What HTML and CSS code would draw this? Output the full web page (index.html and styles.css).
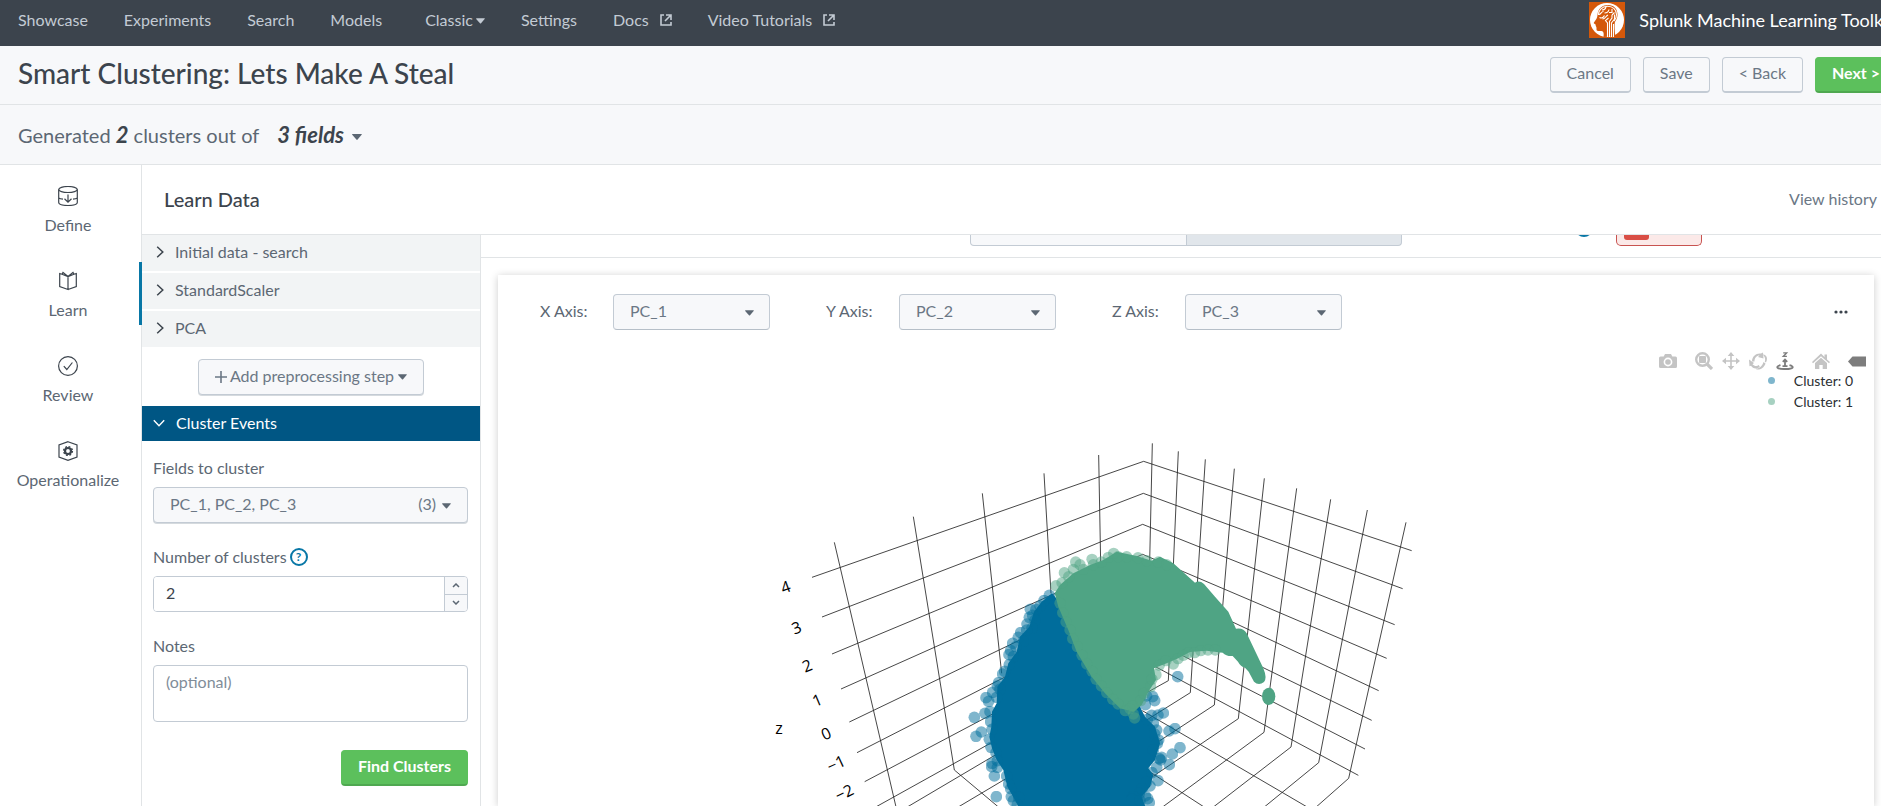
FILE: index.html
```html
<!DOCTYPE html>
<html lang="en">
<head>
<meta charset="utf-8">
<title>Smart Clustering: Lets Make A Steal</title>
<link rel="stylesheet" href="styles.css">
</head>
<body>
<svg class="defs" width="0" height="0" aria-hidden="true">
  <defs>
    <symbol id="caret" viewBox="0 0 10 6"><path d="M0 .5Q0 0 .6 0H9.400Q10 0 9.800.6L5.600 5.600Q5 6.200 4.400 5.600L.2.800Z" fill="currentColor"/></symbol>
    <symbol id="external" viewBox="0 0 12 12"><path d="M4 1H1v10h10V8M6 1h5v5M11 1 5 7" fill="none" stroke="currentColor" stroke-width="1.600"/></symbol>
    <symbol id="chevron" viewBox="0 0 8 12"><path d="M1.200.8 6.800 6 1.200 11.200" fill="none" stroke="currentColor" stroke-width="1.500"/></symbol>
  </defs>
</svg>
<div class="page">
  <header class="topbar">
    <nav class="topnav" aria-label="Main">
      <a href="#">Showcase</a>
      <a href="#">Experiments</a>
      <a href="#">Search</a>
      <a href="#">Models</a>
      <a href="#" class="with-caret">Classic<svg class="caret"><use href="#caret"/></svg></a>
      <a href="#">Settings</a>
      <a href="#" class="with-icon">Docs<svg class="ext"><use href="#external"/></svg></a>
      <a href="#" class="with-icon">Video Tutorials<svg class="ext"><use href="#external"/></svg></a>
    </nav>
    <div class="brand">
      <svg class="brand-logo" viewBox="0 0 36 36" aria-hidden="true">
        <rect width="36" height="36" fill="#d4580a"/>
        <circle cx="18" cy="18" r="17" fill="#fff"/>
        <path d="M8.500 13C9 6 14 3 19 3c6 0 9.500 4 9.500 9.500 0 4-1.500 5.500-2.500 7.500-.8 2-.2 12 .5 14.500L14.500 35c.2-2 .4-3.500-.3-5-.8-1.300-3-.8-5-.9-1.700-.1-1.800-1.200-1.700-3.100.1-1.200-.9-1.500-.8-2.400.1-.8-.2-1.500-1.400-1.900-.8-.4-.6-1 0-1.700 1.800-2.600 3-4 3.200-7Z" fill="#d4580a"/>
        <g fill="none" stroke="#fff" stroke-width="1.100">
          <path d="M9.500 13c-.2-4 3-8.500 9-8.700 5.500-.1 9 3.700 9 8.200 0 3-1 5-2.500 6.500"/>
          <path d="M10.500 15.500c2 1 4 0 5-2M10 12.500c2 0 2-3 4.500-3M13 8c2 0 3.500-1 4-3M13.500 17c3 0 3-3 5.500-4M15.500 11c2 0 4-1 4.500-3.500M18.500 35V21l-2-2.500 3-2.500M20.500 35V19.500l2.500-3.500v-3M22.500 35V21l3-4v-4.500M24.500 35V22M20 10.500h3V7M25.500 10.500l-2.500 2.500"/>
        </g>
      </svg>
      <span class="brand-name">Splunk Machine Learning Toolkit</span>
    </div>
  </header>

  <section class="titlebar">
    <h1>Smart Clustering: Lets Make A Steal</h1>
    <div class="actions">
      <button type="button" class="btn">Cancel</button>
      <button type="button" class="btn">Save</button>
      <button type="button" class="btn">&lt; Back</button>
      <button type="button" class="btn btn-primary">Next &gt;</button>
    </div>
  </section>

  <section class="summary">
    <span>Generated <b>2</b> clusters out of</span>
    <button type="button" class="fields-link">3 fields<svg class="caret"><use href="#caret"/></svg></button>
  </section>

  <div class="workspace">
    <nav class="steps" aria-label="Steps">
      <a href="#" class="step">
        <svg viewBox="0 0 20 20"><g fill="none" stroke="#3c444d" stroke-width="1.200"><ellipse cx="10" cy="3.500" rx="9.300" ry="3"/><path d="M.7 3.500v13c0 4 18.600 4 18.600 0v-13M.7 12c1 .7 2.300 1 4.300 1.200M19.300 12c-1 .7-2.300 1-4.300 1.200M10 8.500v7.500M6.500 12.800 10 16.200l3.500-3.400"/></g></svg>
        Define
      </a>
      <a href="#" class="step step-active" aria-current="step">
        <svg viewBox="0 0 20 20"><path d="M10 5.500v13L1.700 15.500V2.500L4 3.300M10 18.500l8.300-3V2.500L16 3.300M4 3.300l1-1.800 5 4 5-4 1 1.800M4 3.300l6 2.200 6-2.200" fill="none" stroke="#3c444d" stroke-width="1.200"/></svg>
        Learn
      </a>
      <a href="#" class="step">
        <svg viewBox="0 0 20 20"><g fill="none" stroke="#3c444d" stroke-width="1.200"><ellipse cx="10" cy="10" rx="9.400" ry="9.400"/><path d="m5.800 10.200 3 3.300 5.600-7"/></g></svg>
        Review
      </a>
      <a href="#" class="step">
        <svg viewBox="0 0 20 20"><path d="M10 .7 19 4v12l-9 3.300L1 16V4Z" fill="none" stroke="#3c444d" stroke-width="1.200"/><circle cx="10" cy="10" r="3" fill="none" stroke="#3c444d" stroke-width="2.200"/><circle cx="10" cy="10" r="4.400" fill="none" stroke="#3c444d" stroke-width="1.400" stroke-dasharray="1.900 1.555"/></svg>
        Operationalize
      </a>
    </nav>

    <main class="main">
      <div class="main-head">
        <h2>Learn Data</h2>
        <a href="#">View history</a>
      </div>
      <div class="main-body">
        <aside class="panel">
          <div class="rows">
            <button type="button" class="row"><svg><use href="#chevron"/></svg>Initial data - search</button>
            <button type="button" class="row"><svg><use href="#chevron"/></svg>StandardScaler</button>
            <button type="button" class="row"><svg><use href="#chevron"/></svg>PCA</button>
          </div>
          <div class="add-step">
            <button type="button" class="btn btn-gray"><svg class="plus" viewBox="0 0 12 12"><path d="M6 0v12M0 6h12" stroke="currentColor" stroke-width="1.600"/></svg>Add preprocessing step<svg class="caret"><use href="#caret"/></svg></button>
          </div>
          <button type="button" class="section-head"><svg viewBox="0 0 12 8"><path d="M.8 1.200 6 6.800l5.200-5.600" fill="none" stroke="currentColor" stroke-width="1.400"/></svg>Cluster Events</button>
          <form class="form">
            <div class="field">
              <label for="fields">Fields to cluster</label>
              <button type="button" id="fields" class="btn btn-gray multi"><span>PC_1, PC_2, PC_3</span><span class="count">(3)<svg class="caret"><use href="#caret"/></svg></span></button>
            </div>
            <div class="field">
              <div class="label-line"><label for="k">Number of clusters</label><button type="button" class="help" aria-label="Help">?</button></div>
              <div class="number">
                <input id="k" type="number" value="2">
                <div class="spin">
                  <button type="button" aria-label="Increase"><svg viewBox="0 0 8 5"><path d="m1 4 3-3 3 3" fill="none" stroke="currentColor" stroke-width="1.500"/></svg></button>
                  <button type="button" aria-label="Decrease"><svg viewBox="0 0 8 5"><path d="m1 1 3 3 3-3" fill="none" stroke="currentColor" stroke-width="1.500"/></svg></button>
                </div>
              </div>
            </div>
            <div class="field">
              <label for="notes">Notes</label>
              <textarea id="notes" placeholder="(optional)"></textarea>
            </div>
            <button type="button" class="btn btn-primary submit">Find Clusters</button>
          </form>
        </aside>

        <section class="results">
          <div class="toolstrip">
            <div class="segment"><span></span><span></span></div>
            <i class="info-dot"></i>
            <div class="alert-box"><i></i></div>
          </div>
          <article class="card">
            <div class="controls">
              <div class="axis"><label for="ax">X Axis:</label><div class="select"><select id="ax"><option>PC_1</option></select><svg class="caret"><use href="#caret"/></svg></div></div>
              <div class="axis"><label for="ay">Y Axis:</label><div class="select"><select id="ay"><option>PC_2</option></select><svg class="caret"><use href="#caret"/></svg></div></div>
              <div class="axis"><label for="az">Z Axis:</label><div class="select"><select id="az"><option>PC_3</option></select><svg class="caret"><use href="#caret"/></svg></div></div>
              <button type="button" class="more" aria-label="More"><svg viewBox="0 0 14 4" fill="#3c444d"><circle cx="2" cy="2" r="1.600"/><circle cx="7" cy="2" r="1.600"/><circle cx="12" cy="2" r="1.600"/></svg></button>
            </div>
            <div class="plot">
              <svg class="scene" viewBox="3 -270 2472 1428" role="img" aria-label="3D scatter plot of two clusters">
                <defs>
                  <marker id="mb" markerUnits="userSpaceOnUse" markerWidth="36" markerHeight="36" refX="18" refY="18" viewBox="0 0 36 36"><circle cx="18" cy="18" r="17.500" fill="#006d9c" fill-opacity=".5"/></marker>
                  <marker id="mg" markerUnits="userSpaceOnUse" markerWidth="36" markerHeight="36" refX="18" refY="18" viewBox="0 0 36 36"><circle cx="18" cy="18" r="17" fill="#4fa484" fill-opacity=".5"/></marker>
                </defs>
                <g fill="none" stroke="#222" stroke-width="2.500">
                  <path transform="translate(-39 60)" d="M156 412 1151 64M186 531 1150 160M216 642 1148 253M243 747 1148 343M268 846 1146 424M291 938 1146 501M314 1025 1146 585M340 1105 1146 657M223 307 409 1105M460 230 583 990 720 1105M667 160 725 700M852 100 873 460M1016 45 1022 370M435 1105 760 913M588 1105 790 985"/>
                  <path transform="translate(921 30)" d="M191 94 995 362M190 190 968 476M188 283 944 584M188 373 920 685M187 449 896 782M187 537 875 871M187 615 855 957M187 689 835 1036M217 40 209 395M295 64 265 752 200 788M376 88 331 788 200 870M463 116 403 825 200 958M553 145 475 866 200 1052M650 175 552 907 245 1133M752 208 633 951 395 1135M862 240 716 998 548 1135M978 277 806 1045 704 1135M187 842 690 1136M170 1000 380 1136"/>
                </g>
                <g transform="translate(561 330)">
                  <path d="M276 190 245 215 222 245 208 290 180 320 170 365 145 400 135 440 112 470 110 520 96 545 94 590 88 620 96 655 110 690 130 720 142 770 165 810 180 840H560L545 800 570 770 580 735 565 715 585 690 600 640 585 590 555 560 500 450Z" fill="#006d9c"/>
                  <path marker-start="url(#mb)" marker-mid="url(#mb)" marker-end="url(#mb)" fill="none" d="M268 196 252 212 240 228 228 238 211 238 218 256 225 270 208 262 201 282 216 294 200 300 182 308 175 322 190 334 158 340 168 350 152 362 160 380 147 374 148 404 134 424 128 432 116 458 120 478 112 468 110 502 98 487 86 514 78 503 75 550 90 545 43 562 48 619 64 606 92 575 96 598 88 628 93 652 108 668 112 692 95 710 103 738 96 700 112 712 140 738 146 762 109 800 152 776 154 800 160 812 176 802 172 824"/>
                  <path marker-start="url(#mb)" marker-mid="url(#mb)" marker-end="url(#mb)" fill="none" d="M653 440 540 500 560 498 578 500 584 512 556 524 575 556 594 555 610 549 580 580 562 568 590 600 596 630 627 603 645 596 584 612 592 640 580 660 598 686 605 682 602 690 628 704 637 672 660 653 590 712 576 728 594 752 570 768 560 756 546 776 556 798 563 806 568 818 538 790 520 800 516 808 540 812"/>
                  <path d="M284 190 300 165 340 130 390 105 430 90 470 65 530 78 575 92 600 80 640 100 705 158Q718 150 732 162L765 200 805 245 828 296Q850 292 860 310L910 415Q922 444 912 456 896 468 882 455L866 425 855 413Q842 410 834 395L818 378Q800 380 788 368L740 362 690 366 655 385 620 400 582 415 588 450 565 485 545 525 520 545 480 535 435 490 395 440 350 365 325 300 295 230Z" fill="#4fa484"/>
                  <ellipse cx="926" cy="499" rx="20" ry="26" fill="#4fa484"/>
                  <path marker-start="url(#mg)" marker-mid="url(#mg)" marker-end="url(#mg)" fill="none" d="M288 167 306 158 313 128 326 140 340 118 347 96 360 104 370 118 396 88 400 104 424 96 445 82 461 70 474 80 500 80 534 83 560 92 595 96 620 104"/>
                  <path marker-start="url(#mg)" marker-mid="url(#mg)" marker-end="url(#mg)" fill="none" d="M300 220 308 248 318 276 330 300 338 326 352 350 366 376 380 402 396 424 408 448 424 468 440 488 458 508 474 522 496 542 510 536 520 552 524 564 518 528 542 512 552 490 572 470 588 434 576 448 598 406 618 392 640 402 654 386 670 376 686 368 704 368 722 362 744 360 766 360"/>
                </g>
                <g class="ticks">
                  <text transform="translate(38 502) rotate(-20)" y="16">4</text>
                  <text transform="translate(71 624) rotate(-21)" y="16">3</text>
                  <text transform="translate(103 738) rotate(-22)" y="16">2</text>
                  <text transform="translate(133 842) rotate(-23)" y="16">1</text>
                  <text transform="translate(160 942) rotate(-24)" y="16">0</text>
                  <text transform="translate(190 1032) rotate(-25)" y="16">−1</text>
                  <text transform="translate(214 1119) rotate(-26)" y="16">−2</text>
                  <text x="18" y="943">z</text>
                </g>
              </svg>
              <div class="overlay">
                <div class="modebar">
                  <button type="button" aria-label="Download plot" class="apart"><svg viewBox="0 0 18 18" fill="#c4c4c4"><path fill-rule="evenodd" d="M1.500 4.500h3.200L6 2h6l1.300 2.500h3.200Q18 4.500 18 6v8.500q0 1.500-1.500 1.500h-15Q0 16 0 14.500V6q0-1.500 1.500-1.500ZM9 5.600a4.400 4.400 0 1 0 0 8.800 4.400 4.400 0 0 0 0-8.800ZM9 7.200a2.800 2.800 0 1 1 0 5.600 2.800 2.800 0 0 1 0-5.600Z"/></svg></button>
                  <button type="button" aria-label="Zoom"><svg viewBox="0 0 18 18" fill="none" stroke="#c4c4c4"><circle cx="7.500" cy="7.500" r="6.300" stroke-width="2.400"/><path d="m12 12 5 5" stroke-width="3.200"/><path d="M4.500 4.500h6v6h-6Z" fill="#c4c4c4"/></svg></button>
                  <button type="button" aria-label="Pan"><svg viewBox="0 0 18 18" fill="#c4c4c4"><path d="m9 0 3.300 4H9.800v4.200H14V5.700L18 9l-4 3.300V9.800H9.800V14h2.500L9 18l-3.300-4h2.500V9.800H4v2.500L0 9l4-3.300v2.500h4.200V4H5.700Z"/></svg></button>
                  <button type="button" aria-label="Orbital rotation"><svg viewBox="0 0 18 18" fill="#c4c4c4"><path d="M3 9.500C3 4 7.500.8 12 1.500L14 .5l.5 6L9 5l1.500-1.500C7.500 3.500 5.500 6 5.500 9.500Z"/><path d="M13.500 2.500c4.500 0 5.500 4 3.500 8l-1.200-.8c.8-3 0-5.500-2.300-7.200ZM0 7.500l5 3.500-1.500 1.300c2 2.200 4.500 2.200 6.300.8l1 2C7.500 17.500 3.500 16.500 2 13.800L.5 14.200ZM14.500 10l2 1.500c-1.500 4.300-5 6.500-9 6l-.3-1c3.500 0 6-2.500 7.300-6.500Z"/></svg></button>
                  <button type="button" aria-label="Turntable rotation" class="apart"><svg viewBox="0 0 18 18" fill="none" stroke="#7d7d7d" stroke-width="1.400"><path d="M7.200.9h3.400L7.300 4.400h3.600"/><path d="M9 8v6.500M6.800 9.800 9 7.500l2.200 2.300M6.500 14.200h5" stroke-width="1.800"/><path d="M4.500 13.200C-.8 14.500.5 17 8 17h2c7.500 0 8.800-2.500 3.500-3.800" stroke-width="1.800"/></svg></button>
                  <button type="button" aria-label="Reset camera" class="apart"><svg viewBox="0 0 18 18" fill="#c4c4c4"><path d="m9 1.500 3.500 3.500V2.500h2.500v5L18 10l-1 1.200-8-7-8 7L0 10Z"/><path d="m9 5.800 6 5.200v6h-4.300v-4H7.300v4H3v-6Z"/></svg></button>
                  <button type="button" aria-label="Hover closest"><svg viewBox="0 0 18 18" fill="#7d7d7d"><path d="m0 9.500 4.500-5H18v10H4.500Z"/></svg></button>
                </div>
                <ul class="legend">
                  <li class="c0">Cluster: 0</li>
                  <li class="c1">Cluster: 1</li>
                </ul>
              </div>
            </div>
          </article>
        </section>
      </div>
    </main>
  </div>
</div>
</body>
</html>
```

FILE: styles.css
```css
* { box-sizing: border-box; }
html, body { height: 100%; }
body {
  margin: 0;
  overflow: hidden;
  background: #fff;
  color: #3c444d;
  font: 16px/20px Lato, "Open Sans", sans-serif;
}
button, input, select, textarea { font: inherit; color: inherit; }
button { cursor: pointer; }
a { color: inherit; text-decoration: none; }
h1, h2 { margin: 0; }
.defs { position: absolute; }
.caret { width: 10px; height: 6px; color: #5c6773; }

/* the content runs a little wider than the window */
.page {
  display: flex;
  flex-direction: column;
  width: calc(100% + 16px);
  height: 100%;
}

.topbar {
  display: flex;
  justify-content: space-between;
  flex: none;
  height: 46px;
  padding: 0 3px 6px 18px;
  background: #3c444d;
  color: #c3cbd4;
}
.topnav { display: flex; align-items: center; gap: 36px; }
.with-caret { margin-left: 7px; }
.with-caret .caret { margin-left: 3px; color: #c3cbd4; width: 9px; vertical-align: 2px; }
.with-icon .ext { width: 12px; height: 12px; margin-left: 11px; }
.brand { display: flex; align-items: center; gap: 14px; color: #fff; font-size: 18px; }
.brand-logo { width: 36px; height: 36px; }

.titlebar {
  display: flex;
  align-items: center;
  justify-content: space-between;
  flex: none;
  height: 59px;
  padding-left: 18px;
  background: #f7f8fa;
  border-bottom: 1px solid #e1e4e6;
}
h1 { padding-bottom: 4px; font-size: 28px; line-height: 32px; font-weight: 500; }
.actions { display: flex; gap: 12px; }
.btn {
  height: 36px;
  padding: 0 16px 3px;
  border: 1px solid #c3cbd4;
  border-bottom-width: 2px;
  border-radius: 4px;
  background: #f7f8fa;
  color: #6b7785;
  white-space: nowrap;
}
.btn-gray { border-bottom-width: 1px; box-shadow: 0 1px 0 #d5dade; }
.btn-primary {
  border-color: #5cc05c #5cc05c #4fa850;
  background: #5cc05c;
  color: #fff;
  font-weight: 700;
}

.summary {
  display: flex;
  align-items: center;
  gap: 18px;
  flex: none;
  height: 60px;
  padding: 0 18px;
  background: #f7f8fa;
  border-bottom: 1px solid #e1e4e6;
  color: #5c6773;
  font-size: 20px;
  line-height: 26px;
}
.summary b { color: #3c444d; font-size: 22px; font-style: italic; }
.fields-link {
  padding: 0;
  border: 0;
  background: none;
  color: #3c444d;
  font-size: 22px;
  font-weight: 700;
  font-style: italic;
}
.fields-link .caret { margin-left: 8px; vertical-align: 3px; }

.workspace { display: flex; flex: 1; min-height: 0; }
.steps {
  display: flex;
  flex-direction: column;
  gap: 22px;
  flex: none;
  width: 142px;
  padding-top: 12px;
  border-right: 1px solid #e1e4e6;
}
.step {
  display: flex;
  flex-direction: column;
  align-items: center;
  gap: 9px;
  height: 63px;
  padding: 9px 5px 0 0;
  color: #5c6773;
}
.step svg { width: 20px; height: 20px; }
.step-active {
  margin-right: -1px;
  padding-right: 3px;
  border-right: 3px solid #0877a6;
}

.main { display: flex; flex-direction: column; flex: 1; min-width: 0; }
.main-head {
  display: flex;
  align-items: center;
  justify-content: space-between;
  flex: none;
  height: 70px;
  padding: 0 20px 2px 22px;
  border-bottom: 1px solid #e1e4e6;
}
h2 { font-size: 20px; line-height: 26px; font-weight: 500; }
.main-head a { color: #6b7785; }
.main-body { display: flex; flex: 1; min-height: 0; }

.panel { flex: none; width: 339px; border-right: 1px solid #e1e4e6; overflow: hidden; }
.rows { display: flex; flex-direction: column; gap: 2px; }
.row, .section-head {
  display: flex;
  align-items: center;
  gap: 11px;
  width: 100%;
  height: 36px;
  padding: 0 14px 2px;
  border: 0;
  background: #f2f4f5;
  color: #5c6773;
}
.row svg { width: 8px; height: 12px; color: #3c444d; }
.add-step { display: flex; justify-content: center; padding: 12px 0 11px; }
.add-step .plus { width: 12px; height: 12px; margin-right: 3px; vertical-align: -1px; }
.add-step .caret { margin-left: 4px; vertical-align: 2px; width: 9px; }
.section-head { height: 35px; padding: 0 11px 2px; background: #005684; color: #fff; }
.section-head svg { width: 12px; height: 8px; }

.form { display: flex; flex-direction: column; gap: 24px; padding: 17px 12px 18px 11px; }
.field { display: flex; flex-direction: column; gap: 9px; color: #5c6773; }
.label-line { display: flex; gap: 3px; }
.multi { display: flex; align-items: center; justify-content: space-between; }
.count .caret { width: 9px; margin-left: 6px; vertical-align: 1px; }
.help {
  width: 18px;
  height: 18px;
  margin: 1px 0;
  padding: 0;
  border: 2px solid #0877a6;
  border-radius: 50%;
  background: none;
  color: #0877a6;
  font-size: 12px;
  line-height: 14px;
  font-weight: 700;
}
.number {
  display: flex;
  height: 36px;
  border: 1px solid #c3cbd4;
  border-radius: 4px;
  overflow: hidden;
}
.number input {
  flex: 1;
  min-width: 0;
  padding: 0 12px 2px;
  border: 0;
  color: #3c444d;
  appearance: textfield;
}
.number input::-webkit-inner-spin-button { appearance: none; }
.spin { display: flex; flex-direction: column; width: 23px; border-left: 1px solid #c3cbd4; }
.spin button {
  flex: 1;
  display: flex;
  align-items: center;
  justify-content: center;
  padding: 0;
  border: 0;
  background: #f7f8fa;
}
.spin button + button { border-top: 1px solid #c3cbd4; }
.spin svg { width: 8px; height: 5px; }
textarea {
  height: 57px;
  padding: 6px 12px;
  border: 1px solid #c3cbd4;
  border-radius: 4px;
  resize: none;
}
textarea::placeholder { color: #818d99; }
.submit { align-self: flex-end; margin-top: 4px; }

.results { display: flex; flex-direction: column; flex: 1; min-width: 0; }
/* lower edge of the scrolled-away tool row */
.toolstrip {
  display: grid;
  grid-template-columns: 1fr 432px 1fr;
  flex: none;
  height: 23px;
  border-bottom: 1px solid #e1e4e6;
  position: relative;
  padding-right: 6px;
  overflow: hidden;
}
.segment { display: flex; grid-column: 2; height: 11px; }
.segment span { flex: 1; background: #f7f8fa; border: 1px solid #c3cbd4; border-top: 0; border-radius: 0 0 0 4px; }
.segment span + span { background: #e1e6eb; border-left: 0; border-radius: 0 0 4px 0; }
.info-dot {
  position: absolute;
  right: 304px;
  top: -16px;
  width: 18px;
  height: 18px;
  border-radius: 50%;
  background: #0877a6;
}
.alert-box {
  position: absolute;
  right: 195px;
  top: 0;
  width: 86px;
  height: 11px;
  padding-left: 7px;
  border: 1px solid #c85350;
  border-top: 0;
  border-radius: 0 0 5px 5px;
  background: #fbe9e8;
}
.alert-box i { display: block; width: 25px; height: 5px; border-radius: 0 0 3px 3px; background: #d94e45; }

.card {
  display: flex;
  flex-direction: column;
  flex: 1;
  min-height: 0;
  margin: 17px 23px 0 17px;
  padding-top: 19px;
  background: #fff;
  box-shadow: 0 1px 8px rgba(0, 0, 0, .2);
}
.controls { display: flex; gap: 56px; padding: 0 20px 0 42px; }
.axis { display: flex; align-items: center; color: #5c6773; }
.axis label { width: 73px; padding-bottom: 2px; }
.select { position: relative; }
.select select {
  width: 157px;
  height: 36px;
  padding: 0 16px 3px;
  border: 1px solid #c3cbd4;
  border-bottom-color: #b6bfc8;
  border-radius: 4px;
  background: #f7f8fa;
  color: #6b7785;
  appearance: none;
}
.select .caret { position: absolute; right: 16px; top: 16px; width: 9px; pointer-events: none; }
.more { margin-left: auto; width: 26px; padding: 0 0 4px; border: 0; background: none; }
.more svg { width: 14px; height: 4px; vertical-align: middle; }

.plot { position: relative; display: flex; justify-content: center; flex: 1; min-height: 0; overflow: hidden; }
.scene { flex: none; width: 824px; height: 476px; }
.ticks { font: 48px "Open Sans", sans-serif; fill: #000; text-anchor: middle; }
.overlay {
  position: absolute;
  top: 22px;
  right: 8px;
  display: flex;
  flex-direction: column;
  align-items: flex-end;
}
.modebar { display: flex; gap: 9px; }
.modebar button { height: 18px; padding: 0; border: 0; background: none; }
.modebar .apart { margin-right: 9px; }
.modebar svg { display: block; width: 18px; height: 18px; }
.legend { margin: 0; padding: 0 13px 0 0; list-style: none; font-size: 14px; line-height: 21px; color: #2b3033; }
.legend li { display: flex; align-items: center; gap: 19px; }
.legend li::before { content: ""; width: 7px; height: 7px; border-radius: 50%; background: #7fb6cd; }
.legend .c1::before { background: #a7d1c1; }
```
